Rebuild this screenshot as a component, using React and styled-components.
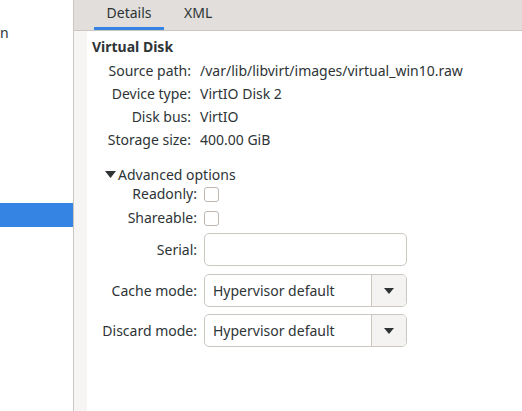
import React from "react";
import styled, { createGlobalStyle } from "styled-components";

const Global = createGlobalStyle`
  html, body { margin: 0; padding: 0; }
  body {
    width: 522px; height: 411px; overflow: hidden;
    font-family: "Noto Sans", "Open Sans", sans-serif;
    font-size: 14px; color: #2e3436; background: #f6f5f4;
  }
`;

const Window = styled.div`
  display: flex;
  width: 522px;
  height: 411px;
  overflow: hidden;
`;

const Sidebar = styled.div`
  width: 73px;
  flex: none;
  background: #ffffff;
  border-right: 1px solid #cdc7c2;
  display: flex;
  flex-direction: column;
  padding-top: 21px;
  box-sizing: content-box;
  overflow: hidden;
`;

const SideItem = styled.div`
  height: 24px;
  line-height: 24px;
  white-space: nowrap;
  margin-top: ${(p) => p.$top || 0}px;
  background: ${(p) => (p.$selected ? "#3584e4" : "transparent")};
  color: ${(p) => (p.$selected ? "#fff" : "#2e3436")};
`;

const Pane = styled.div`
  flex: 1;
  display: flex;
  flex-direction: column;
  background: #f6f5f4;
  min-width: 0;
`;

const TabBar = styled.div`
  height: 30px;
  flex: none;
  background: #e1dedb;
  border-bottom: 1px solid #cdc7c2;
  display: flex;
  align-items: stretch;
  padding-left: 20px;
  gap: 20px;
`;

const Tab = styled.div`
  display: flex;
  align-items: center;
  justify-content: center;
  min-width: ${(p) => (p.$active ? "70px" : "auto")};
  color: #2e3436;
  padding-bottom: 6px;
  box-sizing: border-box;
  box-shadow: ${(p) => (p.$active ? "inset 0 -3px 0 #3584e4" : "none")};
`;

const Body = styled.div`
  flex: 1;
  display: flex;
  padding-left: 13px;
`;

const Content = styled.div`
  flex: 1;
  background: #ffffff;
  padding: 6px 0 0 5px;
  display: flex;
  flex-direction: column;
`;

const Heading = styled.div`
  font-weight: bold;
  height: 20px;
  line-height: 20px;
`;

const InfoGrid = styled.div`
  display: grid;
  grid-template-columns: 99px auto;
  column-gap: 9px;
  row-gap: 6px;
  margin-top: 5px;
  & > * { height: 17px; line-height: 17px; white-space: nowrap; }
`;

const Label = styled.div`
  justify-self: end;
  white-space: nowrap;
`;

const Expander = styled.div`
  margin-top: 16px;
  margin-left: 13px;
  display: flex;
  align-items: center;
  height: 20px;
  gap: 2px;
`;

const Arrow = styled.svg`
  width: 11px;
  height: 7px;
  fill: #2e3436;
`;

const OptGrid = styled.div`
  display: grid;
  grid-template-columns: 105px 203px;
  column-gap: 7px;
  align-items: center;
`;

const OptLabel = styled.div`
  justify-self: end;
  white-space: nowrap;
  height: ${(p) => p.$h}px;
  line-height: ${(p) => p.$h}px;
  margin-top: ${(p) => p.$mt}px;
`;

const CellWrap = styled.div`
  margin-top: ${(p) => p.$mt}px;
  height: ${(p) => p.$h}px;
  display: flex;
  align-items: center;
`;

const Check = styled.div`
  width: 15px;
  height: 15px;
  box-sizing: border-box;
  border: 1px solid #bfb8b1;
  border-radius: 3px;
  background: #fff;
`;

const Entry = styled.div`
  width: 203px;
  height: 33px;
  box-sizing: border-box;
  border: 1px solid #cdc7c2;
  border-radius: 5px;
  background: #fff;
`;

const Combo = styled.div`
  width: 203px;
  height: 33px;
  box-sizing: border-box;
  border: 1px solid #cdc7c2;
  border-radius: 5px;
  background: #fff;
  display: flex;
  overflow: hidden;
`;

const ComboText = styled.div`
  flex: 1;
  padding-left: 8px;
  display: flex;
  align-items: center;
  white-space: nowrap;
`;

const ComboButton = styled.div`
  width: 34px;
  border-left: 1px solid #cdc7c2;
  background: #f4f3f2;
  display: flex;
  align-items: center;
  justify-content: center;
`;

const DownArrow = () => (
  <svg width="10" height="6" viewBox="0 0 10 6">
    <path d="M0 0 L10 0 L5 6 Z" fill="#2e3436" />
  </svg>
);

export default function App() {
  return (
    <>
      <Global />
      <Window>
        <Sidebar>
          <SideItem>n</SideItem>
          <SideItem $top={158} $selected>&nbsp;</SideItem>
        </Sidebar>
        <Pane>
          <TabBar>
            <Tab $active>Details</Tab>
            <Tab>XML</Tab>
          </TabBar>
          <Body>
            <Content>
              <Heading>Virtual Disk</Heading>
              <InfoGrid>
                <Label>Source path:</Label>
                <div>/var/lib/libvirt/images/virtual_win10.raw</div>
                <Label>Device type:</Label>
                <div>VirtIO Disk 2</div>
                <Label>Disk bus:</Label>
                <div>VirtIO</div>
                <Label>Storage size:</Label>
                <div>400.00 GiB</div>
              </InfoGrid>
              <Expander>
                <Arrow viewBox="0 0 11 7">
                  <path d="M0 0 L11 0 L5.5 7 Z" />
                </Arrow>
                <span>Advanced options</span>
              </Expander>
              <OptGrid>
                <OptLabel $h={20} $mt={0}>Readonly:</OptLabel>
                <CellWrap $h={20} $mt={0}><Check /></CellWrap>
                <OptLabel $h={20} $mt={4}>Shareable:</OptLabel>
                <CellWrap $h={20} $mt={4}><Check /></CellWrap>
                <OptLabel $h={33} $mt={5}>Serial:</OptLabel>
                <CellWrap $h={33} $mt={5}><Entry /></CellWrap>
                <OptLabel $h={33} $mt={8}>Cache mode:</OptLabel>
                <CellWrap $h={33} $mt={8}>
                  <Combo>
                    <ComboText>Hypervisor default</ComboText>
                    <ComboButton><DownArrow /></ComboButton>
                  </Combo>
                </CellWrap>
                <OptLabel $h={33} $mt={7}>Discard mode:</OptLabel>
                <CellWrap $h={33} $mt={7}>
                  <Combo>
                    <ComboText>Hypervisor default</ComboText>
                    <ComboButton><DownArrow /></ComboButton>
                  </Combo>
                </CellWrap>
              </OptGrid>
            </Content>
          </Body>
        </Pane>
      </Window>
    </>
  );
}
